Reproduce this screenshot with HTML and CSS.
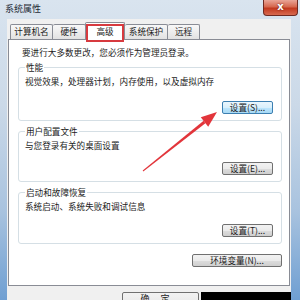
FILE: index.html
```html
<!DOCTYPE html>
<html>
<head>
<meta charset="utf-8">
<link rel="stylesheet" href="styles.css">
</head>
<body>
<div class="window">
  <div class="titlebar">
    <span class="title">系统属性</span>
    <div class="close">x</div>
  </div>
  <div class="client">
    <div class="tabs">
      <div class="tab t1">计算机名</div>
      <div class="tab t2">硬件</div>
      <div class="tab t3 active">高级</div>
      <div class="tab t4">系统保护</div>
      <div class="tab t5">远程</div>
    </div>
    <div class="panel">
      <p class="intro">要进行大多数更改，您必须作为管理员登录。</p>
      <fieldset class="group g1">
        <legend>性能</legend>
        <p>视觉效果，处理器计划，内存使用，以及虚拟内存</p>
        <div class="btnrow"><button class="btn focus">设置(<u>S</u>)...</button></div>
      </fieldset>
      <fieldset class="group g2">
        <legend>用户配置文件</legend>
        <p>与您登录有关的桌面设置</p>
        <div class="btnrow"><button class="btn">设置(<u>E</u>)...</button></div>
      </fieldset>
      <fieldset class="group g3">
        <legend>启动和故障恢复</legend>
        <p>系统启动、系统失败和调试信息</p>
        <div class="btnrow"><button class="btn">设置(<u>T</u>)...</button></div>
      </fieldset>
      <div class="btnrow env"><button class="btn wide">环境变量(<u>N</u>)...</button></div>
    </div>
    <div class="footer">
      <button class="btn ok">确定</button>
      <div class="mask"></div>
    </div>
  </div>
</div>
<svg class="arrow" viewBox="0 0 300 300" xmlns="http://www.w3.org/2000/svg">
  <polygon points="143.3,171.4 142.7,170.6 203.6,120.8 205.4,123.2" fill="#e2353b"/>
  <polygon points="217,112 208.2,126.7 200.8,117.3" fill="#e2353b"/>
</svg>
</body>
</html>
```

FILE: styles.css
```css
* { box-sizing: border-box; }
html, body { margin: 0; padding: 0; }
body {
  width: 300px;
  height: 300px;
  overflow: hidden;
  position: relative;
  font-family: "Noto Sans CJK SC", "Liberation Sans", sans-serif;
  font-size: 8.6px;
  color: #1b1b1b;
}
.window {
  width: 300px;
  height: 300px;
  display: flex;
  flex-direction: column;
  background: linear-gradient(to bottom, #d9e4ef 0%, #cbd9e8 35%, #a9c3df 70%, #6f9fd2 100%);
}
.titlebar {
  height: 19px;
  flex: none;
  display: flex;
  align-items: flex-start;
  padding-left: 5px;
}
.title {
  font-size: 9px;
  line-height: 10px;
  margin-top: 4px;
  color: #1e2a36;
}
.close {
  margin-left: auto;
  margin-right: 2px;
  width: 35px;
  height: 16px;
  border: 1px solid #6e2a22;
  border-top: none;
  border-radius: 0 0 4px 4px;
  background: linear-gradient(#e9a597, #d6684f 45%, #c2391f 55%, #d76a50);
  color: #fff;
  font: bold 10px/14px "DejaVu Sans", sans-serif;
  text-align: center;
  text-shadow: 0 0 2px #5a1208;
}
.client {
  flex: 1;
  margin: 0 9px 0 7px;
  background: #f0f0f0;
  display: flex;
  flex-direction: column;
}
.tabs {
  height: 17px;
  margin-top: 3px;
  padding-left: 3px;
  display: flex;
  align-items: flex-end;
  flex: none;
}
.tab {
  height: 15px;
  border-top: 1px solid #898c95;
  border-right: 1px solid #898c95;
  background: linear-gradient(#f8f8f8, #e2e2e2);
  line-height: 13px;
  text-align: center;
  border-radius: 2px 2px 0 0;
}
.t1 { width: 43px; border-left: 1px solid #898c95; }
.t2 { width: 33px; }
.t3 { width: 40px; }
.t4 { width: 43px; }
.t5 { width: 32px; }
.tab.active {
  height: 18px;
  margin-bottom: -1px;
  margin-left: -1px;
  border-left: 1px solid #898c95;
  background: #fff;
  position: relative;
  z-index: 1;
  line-height: 16px;
}
.tab.active::after {
  content: "";
  position: absolute;
  left: 0;
  right: 0;
  top: 1px;
  bottom: -2px;
  border: 2px solid #d73a3f;
}
.panel {
  height: 247px;
  flex: none;
  margin: 0 1px;
  background: #fff;
  border: 1px solid #898c95;
  padding: 7px 7px 0 9px;
}
p { margin: 0; line-height: 10px; white-space: nowrap; }
.intro { margin-left: 4px; }
.group {
  margin: 5px 0 0;
  padding: 4px 8px 6px 6px;
  border: 1px solid #d5dfe5;
  border-radius: 3px;
  min-width: 0;
}
.group legend {
  padding: 0 1px;
  line-height: 10px;
}
.btnrow {
  display: flex;
  justify-content: flex-end;
}
.g1 .btnrow { margin-top: 15px; }
.g2 .btnrow { margin-top: 12px; }
.g3 .btnrow { margin-top: 13px; }
.btn {
  width: 51px;
  height: 13px;
  padding: 0;
  border: 1px solid #707070;
  border-radius: 2px;
  background: linear-gradient(#f2f2f2 0%, #ebebeb 50%, #dddddd 51%, #cfcfcf 100%);
  font-family: inherit;
  font-size: 8.6px;
  line-height: 11px;
  color: #1b1b1b;
  white-space: nowrap;
}
.btn u { text-decoration: none; }
.btn.focus {
  border-color: #3c7fb1;
  background: linear-gradient(#eaf6fd 0%, #d9f0fc 50%, #bee6fd 51%, #a7d9f5 100%);
}
.env { margin-top: 10px; }
.btn.wide { width: 90px; }
.footer {
  display: flex;
  margin-top: 6px;
}
.btn.ok {
  margin-left: 115px;
  width: 83px;
  height: 20px;
  line-height: 12px;
  padding-top: 0;
  display: flex;
  align-items: flex-start;
  justify-content: center;
  letter-spacing: 11px;
  font-size: 9px;
}
.mask {
  margin-left: 2px;
  width: 90px;
  height: 20px;
  flex: none;
  background: #000;
}
.arrow {
  position: absolute;
  left: 0;
  top: 0;
  width: 300px;
  height: 300px;
  pointer-events: none;
}
```
